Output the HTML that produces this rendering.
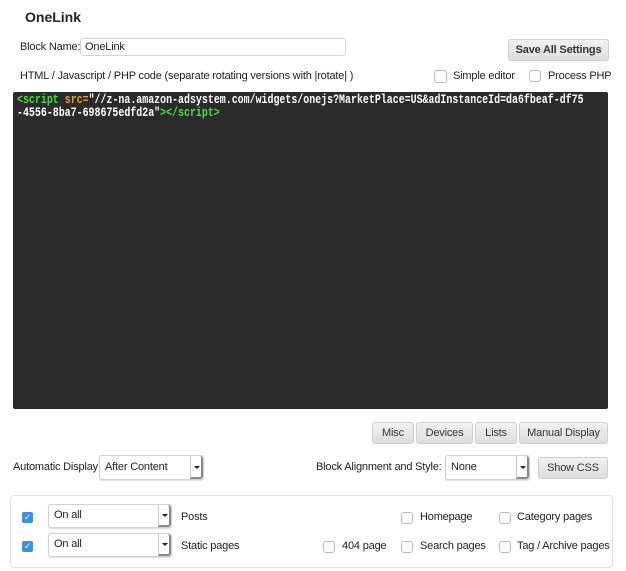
<!DOCTYPE html>
<html><head><meta charset="utf-8"><style>
body{margin:0;width:626px;height:571px;background:#fff;font-family:"Liberation Sans",Arial,sans-serif;font-size:11px;letter-spacing:-0.18px;color:#222;position:relative;overflow:hidden}
.a{position:absolute;white-space:nowrap}
.btn{position:absolute;background:linear-gradient(#f2f2f2,#dedede);border:1px solid #cfcfcf;border-radius:3px;text-align:center;color:#333;box-sizing:border-box}
.inp{position:absolute;border:1px solid #d4d4d4;border-radius:3px;background:#fff;box-sizing:border-box}
.sel{position:absolute;border:1px solid #d0d0d0;border-radius:3px;background:#fff;box-sizing:border-box;box-shadow:0 1px 1px #ddd}
.sel .ar{position:absolute;right:0;top:0;bottom:0;width:13px;border-left:1px solid #ccc;border-right:2px solid #888;border-bottom:2px solid #888;border-radius:0 3px 3px 0;box-sizing:border-box}
.sel .ar:after{content:"";position:absolute;left:3px;top:50%;margin-top:-1px;border:3px solid transparent;border-top:3px solid #222}
.cb{position:absolute;width:12px;height:12px;border:1px solid #bbb;border-radius:3px;background:#fff;box-sizing:border-box}
.ck{position:absolute;width:11px;height:11px;border-radius:2px;background:#3d8fee;color:#fff;font-size:9px;line-height:11px;text-align:center}
.code{position:absolute;left:13px;top:92px;width:595px;height:317px;background:#2b2b2b;border-radius:2px;overflow:hidden}
.code div{position:absolute;left:4px;top:2px;font-family:"Liberation Mono",monospace;font-size:12.5px;font-weight:bold;letter-spacing:0;line-height:13px;color:#fff;white-space:pre;transform:scaleX(0.795);transform-origin:0 0}
.g{color:#3fe43f}.o{color:#f0a030}
</style></head><body>
<div class="a" style="left:25px;top:9px;font-size:14px;font-weight:bold;letter-spacing:0">OneLink</div>
<div class="a" style="left:20px;top:41px">Block Name:</div>
<div class="inp" style="left:80px;top:38px;width:266px;height:18px"><span class="a" style="left:4px;top:2px">OneLink</span></div>
<div class="btn" style="left:508px;top:39px;width:101px;height:22px;line-height:20px;font-weight:bold">Save All Settings</div>
<div class="a" style="left:20px;top:70px">HTML / Javascript / PHP code (separate rotating versions with |rotate| )</div>
<div class="cb" style="left:434px;top:70px;width:13px;height:13px"></div>
<div class="a" style="left:453px;top:70px">Simple editor</div>
<div class="cb" style="left:529px;top:70px;width:12px;height:12px"></div>
<div class="a" style="left:548px;top:70px">Process PHP</div>
<div class="code"><div><span class="g">&lt;script</span> <span class="o">src=</span>"//z-na.amazon-adsystem.com/widgets/onejs?MarketPlace=US&amp;adInstanceId=da6fbeaf-df75
-4556-8ba7-698675edfd2a"<span class="g">&gt;&lt;/script&gt;</span></div></div>
<div class="btn" style="left:372px;top:422px;width:42px;height:22px;line-height:20px">Misc</div>
<div class="btn" style="left:416px;top:422px;width:57px;height:22px;line-height:20px">Devices</div>
<div class="btn" style="left:475px;top:422px;width:42px;height:22px;line-height:20px">Lists</div>
<div class="btn" style="left:519px;top:422px;width:89px;height:22px;line-height:20px">Manual Display</div>
<div class="a" style="left:13px;top:461px">Automatic Display:</div>
<div class="sel" style="left:99px;top:455px;width:105px;height:25px"><span class="a" style="left:5px;top:5px">After Content</span><div class="ar"></div></div>
<div class="a" style="left:316px;top:461px">Block Alignment and Style:</div>
<div class="sel" style="left:445px;top:455px;width:85px;height:25px"><span class="a" style="left:5px;top:5px">None</span><div class="ar"></div></div>
<div class="btn" style="left:538px;top:457px;width:70px;height:22px;line-height:20px">Show CSS</div>
<div style="position:absolute;left:10px;top:495px;width:603px;height:73px;border:1px solid #e2e2e2;border-radius:4px;box-sizing:border-box"></div>
<div class="ck" style="left:22px;top:512px">✓</div>
<div class="sel" style="left:48px;top:504px;width:124px;height:24px"><span class="a" style="left:5px;top:4px">On all</span><div class="ar"></div></div>
<div class="a" style="left:181px;top:511px">Posts</div>
<div class="cb" style="left:401px;top:512px"></div><div class="a" style="left:420px;top:511px">Homepage</div>
<div class="cb" style="left:499px;top:512px"></div><div class="a" style="left:517px;top:511px">Category pages</div>
<div class="ck" style="left:22px;top:541px">✓</div>
<div class="sel" style="left:48px;top:533px;width:124px;height:24px"><span class="a" style="left:5px;top:4px">On all</span><div class="ar"></div></div>
<div class="a" style="left:181px;top:540px">Static pages</div>
<div class="cb" style="left:323px;top:541px"></div><div class="a" style="left:342px;top:540px">404 page</div>
<div class="cb" style="left:401px;top:541px"></div><div class="a" style="left:420px;top:540px">Search pages</div>
<div class="cb" style="left:499px;top:541px"></div><div class="a" style="left:517px;top:540px">Tag / Archive pages</div>
</body></html>
